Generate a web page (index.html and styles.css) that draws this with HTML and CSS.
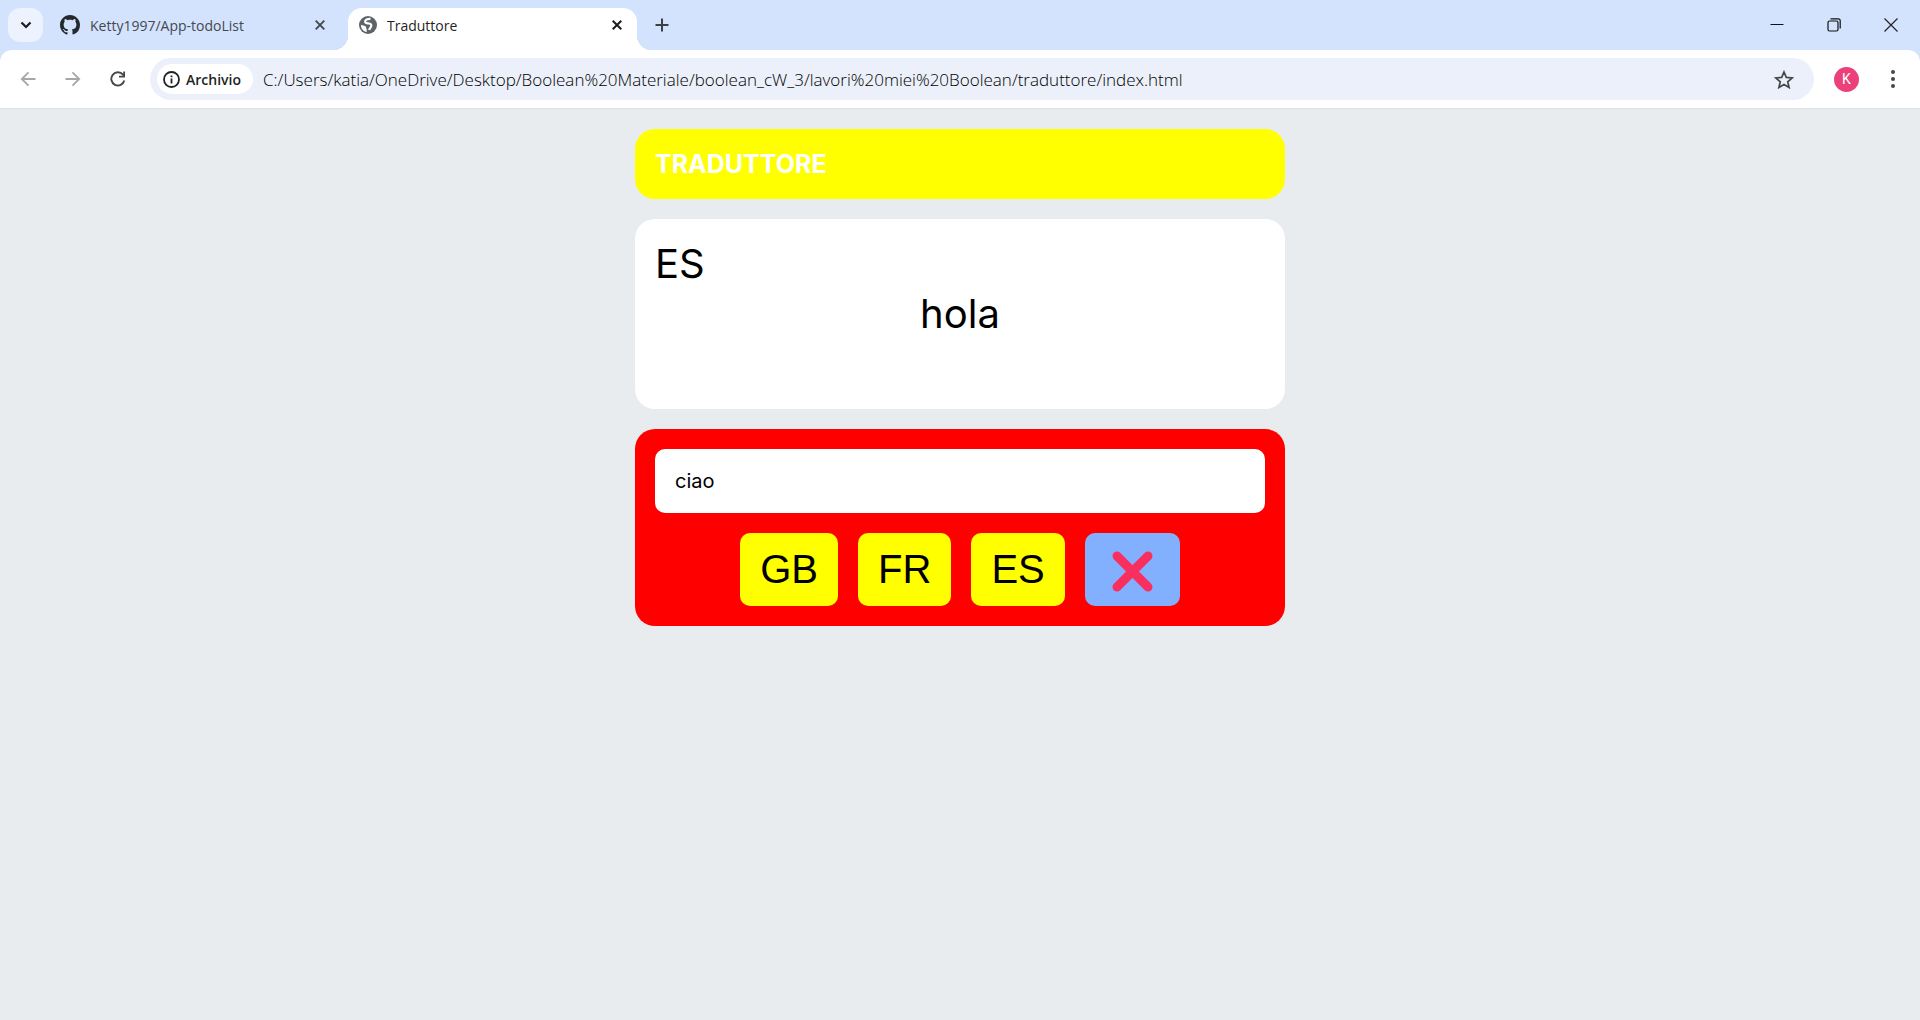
FILE: index.html
```html
<!DOCTYPE html>
<html lang="it">
<head>
<meta charset="utf-8">
<title>Traduttore</title>
<link rel="stylesheet" href="styles.css">
</head>
<body>
<header class="browser">
  <div class="tab-strip">
    <button class="tab-search" type="button" aria-label="Cerca nelle schede">
      <svg width="12" height="8" viewBox="0 0 12 8"><path d="M1.5 1.5 6 6l4.500-4.500" fill="none" stroke="#1b1c1f" stroke-width="2.200"/></svg>
    </button>
    <div class="tab">
      <svg class="favicon" width="20" height="20" viewBox="0 0 16 16"><path fill="#24292f" d="M8 0C3.580 0 0 3.580 0 8c0 3.540 2.290 6.530 5.470 7.590.4.070.55-.17.55-.38 0-.19-.01-.82-.01-1.490-2.010.37-2.530-.49-2.690-.94-.09-.23-.48-.94-.82-1.130-.28-.15-.68-.52-.01-.53.63-.01 1.080.58 1.230.82.72 1.210 1.870.87 2.330.66.07-.52.28-.87.51-1.070-1.780-.2-3.640-.89-3.640-3.950 0-.87.31-1.590.82-2.150-.08-.2-.36-1.020.08-2.120 0 0 .67-.21 2.200.82.64-.18 1.320-.27 2-.27s1.360.09 2 .27c1.530-1.040 2.200-.82 2.200-.82.44 1.100.16 1.920.08 2.120.51.56.82 1.270.82 2.150 0 3.070-1.870 3.750-3.650 3.950.29.25.54.73.54 1.480 0 1.070-.01 1.930-.01 2.200 0 .21.15.46.55.38A8.010 8.010 0 0 0 16 8c0-4.420-3.580-8-8-8z"/></svg>
      <span class="tab-title">Ketty1997/App-todoList</span>
      <button class="tab-close" type="button" aria-label="Chiudi scheda"><svg width="10" height="10" viewBox="0 0 10 10"><path d="m.7.7 8.600 8.600m0-8.600L.7 9.300" stroke="#45484d" stroke-width="1.900"/></svg></button>
    </div>
    <div class="tab tab-active">
      <svg class="favicon" width="18" height="18" viewBox="0 0 18 18"><circle cx="9" cy="9" r="9" fill="#5f6368"/><path d="M11.500 2.800C8 2.600 5.800 4.300 6.200 6c.3 1.500 2.300 1.200 4 1.500 1.800.3 2.500 1.500 1.900 3-.6 1.600-1.600 1.600-1.900 3.500" fill="none" stroke="#fff" stroke-width="2.200"/><path d="M2 8.800c1.600 1.200 3 .4 4.400 1.400 1.200.9.400 2 1.300 2.900V16C4.500 15.700 1.800 12.700 2 8.800z" fill="#fff"/></svg>
      <span class="tab-title">Traduttore</span>
      <button class="tab-close" type="button" aria-label="Chiudi scheda"><svg width="10" height="10" viewBox="0 0 10 10"><path d="m.7.7 8.600 8.600m0-8.600L.7 9.300" stroke="#1b1c1f" stroke-width="2"/></svg></button>
    </div>
    <button class="new-tab" type="button" aria-label="Nuova scheda"><svg width="14" height="14" viewBox="0 0 14 14"><path d="M7 .5v13M.5 7h13" stroke="#3c4043" stroke-width="2"/></svg></button>
    <div class="window-controls">
      <button type="button" aria-label="Riduci a icona"><svg width="14" height="14" viewBox="0 0 14 14"><path d="M.5 6.500h13" stroke="#111"/></svg></button>
      <button type="button" aria-label="Ripristina"><svg width="14" height="14" viewBox="0 0 14 14" fill="none" stroke="#111" stroke-width="1.200"><rect x="1" y="3" width="10" height="10" rx="1.500"/><path d="M3.500.8h7.700c1.300 0 2 .8 2 2v7.700"/></svg></button>
      <button type="button" aria-label="Chiudi"><svg width="14" height="14" viewBox="0 0 14 14"><path d="m.5.5 13 13m0-13-13 13" stroke="#222" stroke-width="1.200"/></svg></button>
    </div>
  </div>
  <div class="toolbar">
    <nav class="nav-buttons">
      <button type="button" aria-label="Indietro"><svg width="16" height="16" viewBox="0 0 16 16"><path d="M15.500 8H2m6.500-6.700L1.800 8l6.700 6.700" fill="none" stroke="#a6a7a9" stroke-width="1.800"/></svg></button>
      <button type="button" aria-label="Avanti"><svg width="16" height="16" viewBox="0 0 16 16"><path d="M.5 8H14M7.500 1.300 14.200 8l-6.700 6.700" fill="none" stroke="#a6a7a9" stroke-width="1.800"/></svg></button>
      <button type="button" aria-label="Ricarica"><svg width="16" height="16" viewBox="0 0 16 16"><path d="M14.300 9.500A6.600 6.600 0 1 1 13 3.700l1.500 1.700" fill="none" stroke="#45484a" stroke-width="1.900"/><path d="M15 .5v6H9V4.700h4.200V.5z" fill="#45484a"/></svg></button>
    </nav>
    <div class="omnibox">
      <button class="site-info" type="button">
        <svg width="17" height="17" viewBox="0 0 17 17"><circle cx="8.500" cy="8.500" r="7.500" fill="none" stroke="#202124" stroke-width="1.800"/><path d="M8.500 7.500v5M8.500 4.500v1.800" stroke="#202124" stroke-width="1.800"/></svg>
        <span>Archivio</span>
      </button>
      <input class="address" type="text" aria-label="Indirizzo" value="C:/Users/katia/OneDrive/Desktop/Boolean%20Materiale/boolean_cW_3/lavori%20miei%20Boolean/traduttore/index.html">
      <button class="bookmark" type="button" aria-label="Aggiungi ai preferiti"><svg width="20" height="19" viewBox="0 0 20 19"><path d="m10 2 2.300 5.400 5.900.5-4.500 3.900 1.400 5.700-5.100-3.100-5.100 3.100 1.400-5.700-4.500-3.900 5.900-.5z" fill="none" stroke="#45484a" stroke-width="1.700"/></svg></button>
    </div>
    <button class="profile" type="button" aria-label="Profilo">K</button>
    <button class="menu" type="button" aria-label="Menu"><svg width="4" height="18" viewBox="0 0 4 18" fill="#45484a"><circle cx="2" cy="2" r="2"/><circle cx="2" cy="9" r="2"/><circle cx="2" cy="16" r="2"/></svg></button>
  </div>
</header>
<main class="app">
  <div class="card title-card"><h1>TRADUTTORE</h1></div>
  <section class="card display-card">
    <div class="lang-label">ES</div>
    <div class="translation">hola</div>
  </section>
  <section class="card actions-card">
    <input class="text-input" type="text" aria-label="Testo da tradurre" value="ciao">
    <div class="buttons">
      <button class="lang-button" type="button">GB</button>
      <button class="lang-button" type="button">FR</button>
      <button class="lang-button" type="button">ES</button>
      <button class="lang-button reset-button" type="button" aria-label="Cancella"><svg width="55" height="44" viewBox="0 0 55 44"><path d="m12 8 31 31m0-31L12 39" stroke="#f92f60" stroke-width="9" stroke-linecap="round"/></svg></button>
    </div>
  </section>
</main>
</body>
</html>
```
FILE: styles.css
```css
* {
  box-sizing: border-box;
  margin: 0;
  padding: 0;
}

body {
  min-height: 100vh;
  background: #e9ecef;
  color: #000;
  font-family: Inter, sans-serif;
}

button,
input {
  border: 0;
  background: none;
  color: inherit;
  outline: none;
}

button {
  display: flex;
  align-items: center;
  justify-content: center;
}

svg {
  display: block;
  flex-shrink: 0;
}

/* Browser frame */
.browser {
  background: #d3e3fd;
  font-family: "Open Sans", "Noto Sans", sans-serif;
}

.tab-strip {
  display: flex;
  height: 50px;
  padding: 8px 0 0 8px;
}

.tab-search {
  width: 35px;
  height: 34px;
  margin-right: 5px;
  border-radius: 12px;
  background: #ecf2fe;
}

.tab {
  display: flex;
  align-items: center;
  width: 300px;
  padding: 0 18px 8px 12px;
  font-size: 14px;
  color: #45484d;
}

.tab .favicon {
  margin-right: 10px;
}

.tab-title {
  flex: 1;
  line-height: 22px;
  padding-top: 2px;
  white-space: nowrap;
}

.tab-close {
  width: 20px;
  height: 20px;
}

.tab-active {
  position: relative;
  width: 289px;
  padding: 0 10px 8px 11px;
  border-radius: 14px 14px 0 0;
  background: #fff;
  color: #1f1f1f;
}

.tab-active::before,
.tab-active::after {
  content: "";
  position: absolute;
  bottom: 0;
  width: 14px;
  height: 14px;
}

.tab-active::before {
  right: 100%;
  background: radial-gradient(circle at 0 0, transparent 14px, #fff 14px);
}

.tab-active::after {
  left: 100%;
  background: radial-gradient(circle at 100% 0, transparent 14px, #fff 14px);
}

.new-tab {
  width: 34px;
  height: 34px;
  margin-left: 8px;
}

.window-controls {
  display: flex;
  margin-left: auto;
  padding-right: 1px;
}

.window-controls button {
  width: 57px;
  height: 34px;
}

.toolbar {
  display: flex;
  align-items: center;
  height: 59px;
  padding: 0 23px 0 5px;
  border-bottom: 1px solid #dfe1e3;
  border-radius: 12px 12px 0 0;
  background: #fff;
}

.nav-buttons {
  display: flex;
}

.nav-buttons button {
  width: 45px;
  height: 40px;
}

.omnibox {
  display: flex;
  flex: 1;
  align-items: center;
  height: 42px;
  margin-left: 10px;
  padding: 0 20px 0 7px;
  border-radius: 21px;
  background: #ebf0fa;
}

.site-info {
  justify-content: flex-start;
  gap: 6px;
  width: 96px;
  height: 30px;
  padding-left: 6px;
  border-radius: 15px;
  background: #fff;
  color: #1f1f1f;
  font: 600 14px "Open Sans", sans-serif;
}

.address {
  flex: 1;
  height: 30px;
  padding-left: 10px;
  color: #000;
  font: 300 17px "Open Sans", sans-serif;
}

.profile {
  width: 25px;
  height: 25px;
  margin: 0 30px 0 20px;
  border-radius: 50%;
  background: #ec407a;
  color: #fff;
  font: 14px Roboto, sans-serif;
}

.menu {
  width: 8px;
  height: 30px;
}

/* Translator */
.app {
  display: flex;
  flex-direction: column;
  gap: 20px;
  width: 100%;
  max-width: 690px;
  margin: 0 auto;
  padding: 20px;
}

.card {
  padding: 20px;
  border-radius: 20px;
  background: #fff;
}

.title-card {
  background: #ff0;
  color: #fff;
}

.title-card h1 {
  font-size: 25px;
  line-height: 30px;
}

.display-card {
  min-height: 190px;
  font-size: 40px;
  line-height: 50px;
}

.translation {
  text-align: center;
}

.actions-card {
  background: #f00;
}

.text-input {
  display: block;
  width: 100%;
  padding: 20px;
  border-radius: 10px;
  background: #fff;
  font: 20px/24px Inter, sans-serif;
}

.buttons {
  display: flex;
  flex-wrap: wrap;
  justify-content: center;
  gap: 20px;
  margin-top: 20px;
}

.lang-button {
  height: 73px;
  padding: 0 20px;
  border-radius: 10px;
  background: #ff0;
  font: 40px "Liberation Sans", Arial, sans-serif;
}

.reset-button {
  background: #82b0ff;
}
```
